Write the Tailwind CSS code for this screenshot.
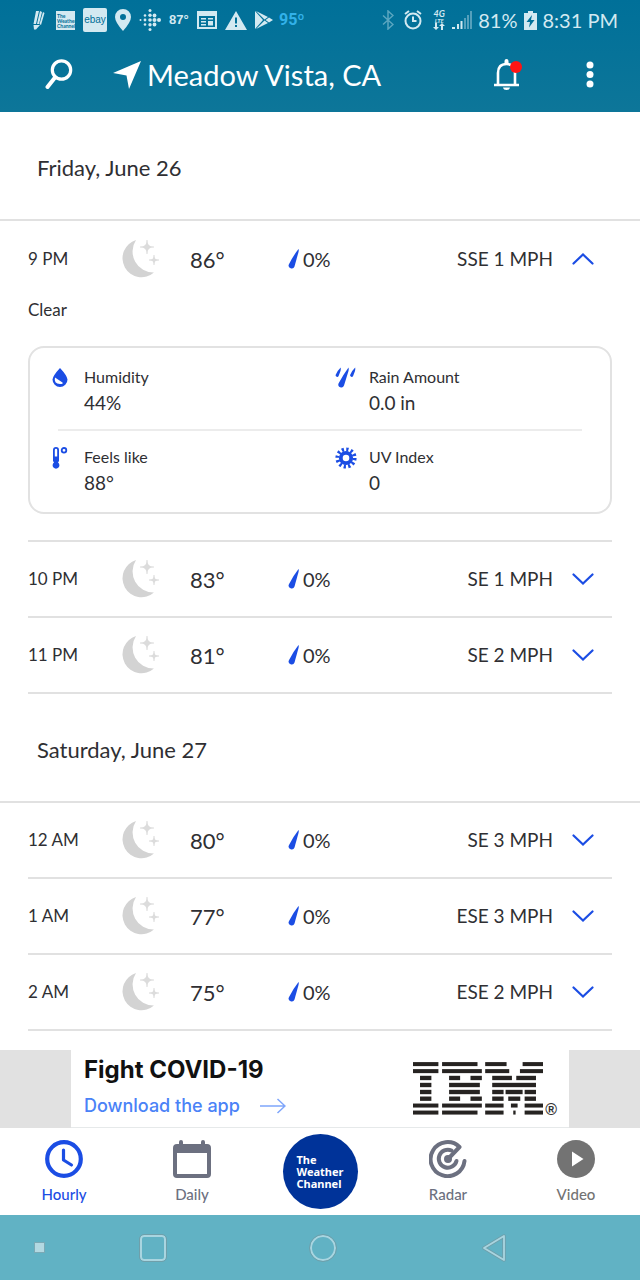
<!DOCTYPE html>
<html lang="en">
<head>
  <meta charset="UTF-8">
  <meta name="viewport" content="width=device-width, initial-scale=1.0">
  <title>Hourly - Meadow Vista, CA</title>
  <script src="https://cdn.jsdelivr.net/npm/@tailwindcss/browser@4"></script>
</head>
<body class="bg-white text-[#2f2f33] font-['Lato',sans-serif] flex flex-col min-h-screen">
  <!-- shared icons -->
  <svg class="hidden">
    <symbol id="moon" viewBox="0 0 38 38">
      <path fill="#d3d3d3" d="M14 0A19 19 0 1 0 32 32.500A21 21 0 0 1 14 0Z"/>
      <path fill="#dcdcdc" d="M25 0Q25.300 6.700 32 7Q25.300 7.300 25 14Q24.700 7.300 18 7Q24.700 6.700 25 0ZM32 15Q32.200 19.800 37 20Q32.200 20.200 32 25Q31.800 20.200 27 20Q31.800 19.800 32 15Z"/>
      <path stroke="#dcdcdc" stroke-width="1" d="M25 0V14M18 7H32M32 15V25M27 20H37"/>
    </symbol>
    <symbol id="drop" viewBox="0 0 12 20">
      <path fill="#1b4de4" d="M10.500 0Q11 1 10.500 3L6.500 17.500A3 3 0 0 1 0.800 15.500Q5 7 10.500 0Z"/>
    </symbol>
    <symbol id="chevron" viewBox="0 0 22 12">
      <path fill="none" stroke="#1b4de4" stroke-width="2.200" stroke-linecap="round" d="M1.500 1.500L11 10.500L20.500 1.500"/>
    </symbol>
  </svg>

  <!-- header -->
  <header class="bg-gradient-to-b from-[#007099] to-[#0d7699] text-white">
    <div class="h-10 pl-8 pr-[22px] flex items-center justify-between text-[#d3e9f1]">
      <div class="flex items-center gap-2">
        <svg class="w-4 h-5" viewBox="0 0 16 20" fill="currentColor"><path d="M4 1L7 1L4 14L1.500 14ZM8 1L10 2L7 14L5 14ZM11 2L12.500 3L9 15L7.500 14ZM1.500 15H8L4 19.500H2Z"/></svg>
        <div class="w-[19px] h-[19px] bg-[#d3e9f1] text-[#006f98] text-[5px] leading-[5px] font-bold pl-px pt-[3px]">The<br>Weather<br>Channel</div>
        <div class="w-6 h-6 rounded-xs bg-[#d3e9f1] text-[#006f98] text-[10px] leading-6 text-center font-['Liberation_Sans',sans-serif]">ebay</div>
        <svg class="w-4 h-[22px]" viewBox="0 0 16 22" fill="currentColor"><path fill-rule="evenodd" d="M8 0A8 8 0 0 0 0 8Q0 13 8 22Q16 13 16 8A8 8 0 0 0 8 0ZM8 5A3 3 0 1 1 8 11A3 3 0 0 1 8 5Z"/></svg>
        <svg class="w-[22px] h-[22px]" viewBox="0 0 22 22" fill="currentColor">
          <circle cx="1.500" cy="11" r="1"/><circle cx="6" cy="6.500" r="1.300"/><circle cx="6" cy="11" r="1.400"/><circle cx="6" cy="15.500" r="1.300"/>
          <circle cx="11" cy="1.500" r="1.500"/><circle cx="11" cy="6.300" r="1.700"/><circle cx="11" cy="11" r="1.800"/><circle cx="11" cy="15.700" r="1.700"/><circle cx="11" cy="20.500" r="1.500"/>
          <circle cx="15.500" cy="6.500" r="1.900"/><circle cx="15.500" cy="11" r="2"/><circle cx="15.500" cy="15.500" r="1.900"/><circle cx="20" cy="11" r="2"/>
        </svg>
        <span class="w-5 text-[13px] leading-5 font-bold font-['Liberation_Sans',sans-serif]">87°</span>
        <svg class="w-5 h-[18px]" viewBox="0 0 20 18"><path fill="currentColor" fill-rule="evenodd" d="M0 0H20V18H0ZM2 5V16H18V5ZM4 7H9V8.500H4ZM11 7H16V8.500H11ZM4 10H9V11.500H4ZM4 13H9V14.500H4ZM11 10H16V14.500H11Z"/></svg>
        <svg class="w-[22px] h-[19px]" viewBox="0 0 22 19"><path fill="currentColor" fill-rule="evenodd" d="M11 0L22 19H0ZM10 6.500H12V12.500H10ZM10 14H12V16H10Z"/></svg>
        <svg class="w-[18px] h-[18px]" viewBox="0 0 18 18"><path fill="currentColor" d="M0 0L8 9L0 18ZM1 0L13 6L9.500 8.500ZM1 18L13 12L9.500 9.500ZM14 6.500L18 9L14 11.500L10.500 9Z"/></svg>
        <span class="-ml-0.5 text-base leading-5 font-bold text-[#32b1e9] font-['Roboto',sans-serif]">95º</span>
      </div>
      <div class="flex items-center gap-1.5">
        <svg class="w-3 h-5 text-[#5ba6c0]" viewBox="0 0 12 20" fill="none" stroke="currentColor" stroke-width="1.500"><path d="M1 5.500L11 14.500L6 19V1L11 5.500L1 14.500"/></svg>
        <svg class="mx-1 w-[18px] h-5" viewBox="0 0 18 20" fill="none" stroke="currentColor" stroke-width="2"><circle cx="9" cy="11" r="7.500"/><path d="M9 6.500V11H12.500M1 4L5 1M17 4L13 1"/></svg>
        <div class="w-[14px] flex flex-col items-center font-bold italic">
          <span class="text-[9px] leading-[8px]">4G</span>
          <span class="text-[6px] leading-[5px]">LTE</span>
          <svg class="w-3 h-[7px]" viewBox="0 0 12 7" fill="currentColor"><path d="M2 0H4V4H6L3 7L0 4H2ZM8 7H10V3H12L9 0L6 3H8Z"/></svg>
        </div>
        <svg class="w-5 h-[18px]" viewBox="0 0 20 18" fill="currentColor"><path d="M0 16H3V18H0ZM5 13H7V18H5ZM8.500 10H10.500V18H8.500Z"/><path opacity=".4" d="M12 7H14V18H12ZM15 4H17V18H15ZM18 0H20V18H18Z"/></svg>
        <span class="text-xl leading-6">81%</span>
        <svg class="w-[13px] h-[19px]" viewBox="0 0 13 19"><path fill="currentColor" fill-rule="evenodd" d="M4 0H9V2H13V19H0V2H4ZM8 4L2.500 11H6L5 16.500L10.500 9H7Z"/></svg>
        <span class="text-xl leading-6 whitespace-nowrap">8:31 PM</span>
      </div>
    </div>
    <div class="h-[72px] pl-[45px] pr-[46px] pb-0.5 flex items-center">
      <button type="button" aria-label="Search">
        <svg class="w-7 h-8" viewBox="0 0 28 32" fill="none" stroke="currentColor" stroke-width="3.200" stroke-linecap="round"><circle cx="16.500" cy="11" r="9.200"/><path stroke-width="4" d="M10 18.500L2.500 28"/></svg>
      </button>
      <svg class="ml-10 w-7 h-7" viewBox="0 0 28 28" fill="currentColor"><path d="M28 0L16 28L13.500 14.500L0 12Z"/></svg>
      <h1 class="ml-1.5 text-[29px] leading-9 whitespace-nowrap">Meadow Vista, CA</h1>
      <button type="button" class="ml-auto" aria-label="Notifications">
        <svg class="w-7 h-8" viewBox="0 0 28 32"><g fill="none" stroke="currentColor" stroke-width="2.600"><path d="M0 26H25M4 26V14Q4 5 12.500 5Q21 5 21 14V26"/></g><path fill="currentColor" d="M10.500 5V2A2 2 0 0 1 14.500 2V5ZM9 28.500H16Q15.500 31 12.500 31Q9.500 31 9 28.500Z"/><circle cx="22" cy="8" r="6" fill="#ff1414"/></svg>
      </button>
      <button type="button" class="ml-14" aria-label="More options">
        <svg class="w-4 h-7" viewBox="0 0 16 28" fill="currentColor"><circle cx="12" cy="4" r="3.500"/><circle cx="12" cy="13.500" r="3.500"/><circle cx="12" cy="23" r="3.500"/></svg>
      </button>
    </div>
  </header>

  <!-- hourly forecast -->
  <main id="forecast" class="flex-grow pb-[18px]"></main>

  <!-- ad -->
  <aside class="h-[78px] bg-[#e1e1e1] flex justify-center">
    <div class="w-[498px] bg-white border-b border-[#e6e9ea] pl-[13px] pr-3 flex justify-between">
      <div class="pt-1">
        <p class="text-2xl leading-8 font-bold text-[#111] font-['Inter',sans-serif]">Fight COVID-19</p>
        <a href="#" class="mt-2 flex items-center gap-5 text-lg leading-6 font-medium text-[#4a82f7] font-['Inter',sans-serif]">Download the app
          <svg class="w-[26px] h-4 text-[#7fa6fb]" viewBox="0 0 26 16" fill="none" stroke="currentColor" stroke-width="1.500"><path d="M0 8H25M17.500 1L25 8L17.500 15"/></svg>
        </a>
      </div>
      <div class="pt-3 flex">
        <svg class="w-[130px] h-[53px]" viewBox="0 0 389 158" fill="#262321" role="img" aria-label="IBM">
          <rect x="0" y="0" width="76" height="12"/><rect x="87" y="0" width="106" height="12"/><rect x="216" y="0" width="64" height="12"/><rect x="328" y="0" width="61" height="12"/>
          <rect x="0" y="21" width="76" height="12"/><rect x="87" y="21" width="119" height="12"/><rect x="216" y="21" width="72" height="12"/><rect x="320" y="21" width="69" height="12"/>
          <rect x="21" y="41" width="34" height="13"/><rect x="108" y="41" width="33" height="13"/><rect x="172" y="41" width="34" height="13"/><rect x="237" y="41" width="59" height="13"/><rect x="309" y="41" width="59" height="13"/>
          <rect x="21" y="62" width="34" height="13"/><rect x="108" y="62" width="92" height="13"/><rect x="237" y="62" width="131" height="13"/>
          <rect x="21" y="83" width="34" height="13"/><rect x="108" y="83" width="92" height="13"/><rect x="237" y="83" width="34" height="13"/><rect x="277" y="83" width="51" height="13"/><rect x="334" y="83" width="34" height="13"/>
          <rect x="21" y="103" width="34" height="13"/><rect x="108" y="103" width="33" height="13"/><rect x="172" y="103" width="34" height="13"/><rect x="237" y="103" width="34" height="13"/><rect x="285" y="103" width="36" height="13"/><rect x="334" y="103" width="34" height="13"/>
          <rect x="0" y="124" width="76" height="12"/><rect x="87" y="124" width="119" height="12"/><rect x="216" y="124" width="55" height="12"/><rect x="293" y="124" width="20" height="12"/><rect x="334" y="124" width="55" height="12"/>
          <rect x="0" y="145" width="76" height="12"/><rect x="87" y="145" width="106" height="12"/><rect x="216" y="145" width="55" height="12"/><rect x="300" y="145" width="7" height="12"/><rect x="334" y="145" width="55" height="12"/>
        </svg>
        <span class="ml-0.5 mt-10 text-base leading-4 font-bold text-[#333] font-['Liberation_Sans',sans-serif]">®</span>
      </div>
    </div>
  </aside>

  <!-- tab bar -->
  <nav class="h-[87px] bg-white grid grid-cols-5 justify-items-center text-[15px] leading-5 font-medium text-[#6c7080]">
    <a href="#" class="pt-3 flex flex-col items-center gap-1.5 text-[#1b4de4]">
      <svg class="w-[38px] h-[38px]" viewBox="0 0 38 38" fill="none" stroke="currentColor"><circle cx="19" cy="19" r="16.800" stroke-width="4.200"/><path stroke-width="3.200" stroke-linecap="round" stroke-linejoin="round" d="M18.500 10V20L26.500 25"/></svg>
      Hourly
    </a>
    <a href="#" class="pt-3 flex flex-col items-center gap-1.5">
      <svg class="w-[38px] h-[38px]" viewBox="0 0 38 38"><path fill="currentColor" fill-rule="evenodd" d="M6 4V2A2 2 0 0 1 10 2V4H28V2A2 2 0 0 1 32 2V4H34Q38 4 38 8V34Q38 38 34 38H4Q0 38 0 34V8Q0 4 4 4ZM4 13V34H34V13Z"/></svg>
      Daily
    </a>
    <a href="#" class="mt-1.5 w-[75px] h-[75px] rounded-full bg-[#003399] text-white text-[11px] leading-3 font-bold font-['Noto_Sans',sans-serif] flex items-center justify-center">
      <span>The<br>Weather<br>Channel</span>
    </a>
    <a href="#" class="pt-3 flex flex-col items-center gap-1.5">
      <svg class="w-[38px] h-[38px]" viewBox="0 0 38 38" fill="none" stroke="currentColor" stroke-width="4" stroke-linecap="round" stroke-linejoin="round"><path d="M35.500 21A17 17 0 1 1 30.500 7L19 19"/><path d="M27.500 21A9 9 0 1 1 22.500 10.500"/><circle cx="19" cy="19" r="2"/></svg>
      Radar
    </a>
    <a href="#" class="pt-3 flex flex-col items-center gap-1.5 text-[#737373]">
      <svg class="w-[38px] h-[38px]" viewBox="0 0 38 38"><circle cx="19" cy="19" r="19" fill="currentColor"/><path fill="#fff" d="M15 11.500L26.500 19L15 26.500Z"/></svg>
      Video
    </a>
  </nav>

  <!-- system buttons -->
  <footer class="h-[65px] bg-[#61b2c4] text-[#a9d5e0] grid grid-cols-[78fr_149fr_191fr_151fr_71fr] items-center justify-items-center">
    <span class="w-[9px] h-[9px] bg-[#b3d9e2] outline outline-[#7aa9b5]"></span>
    <button type="button" class="w-[26px] h-[26px] border-2 border-[#a9d5e0] rounded-sm outline outline-[#6f9faa]" aria-label="Recent apps"></button>
    <button type="button" class="w-[26px] h-[26px] border-2 border-[#a9d5e0] rounded-full outline outline-[#6f9faa]" aria-label="Home"></button>
    <button type="button" aria-label="Back">
      <svg class="w-6 h-7" viewBox="0 0 24 28" fill="none" stroke-linejoin="round"><path stroke="#6f9faa" stroke-width="3.500" d="M22 2V26L2 14Z"/><path stroke="currentColor" stroke-width="1.800" d="M22 2V26L2 14Z"/></svg>
    </button>
  </footer>

  <script>
    const days = [
      { name: 'Friday, June 26', hours: [
        { time: '9 PM', temp: '86°', rain: '0%', wind: 'SSE 1 MPH', open: true },
        { time: '10 PM', temp: '83°', rain: '0%', wind: 'SE 1 MPH' },
        { time: '11 PM', temp: '81°', rain: '0%', wind: 'SE 2 MPH' }
      ]},
      { name: 'Saturday, June 27', hours: [
        { time: '12 AM', temp: '80°', rain: '0%', wind: 'SE 3 MPH' },
        { time: '1 AM', temp: '77°', rain: '0%', wind: 'ESE 3 MPH' },
        { time: '2 AM', temp: '75°', rain: '0%', wind: 'ESE 2 MPH' }
      ]}
    ];

    // one cell of the details card
    function cell(icon, label, value) {
      return `
        <div class="flex">
          <svg class="mt-[3px] w-[22px] h-[22px] mr-3 text-[#1b4de4]" viewBox="0 0 22 22">${icon}</svg>
          <dl><dt class="text-base leading-[26px]">${label}</dt><dd class="text-[19px] leading-[26px]">${value}</dd></dl>
        </div>`;
    }

    const humidity = '<path fill="currentColor" fill-rule="evenodd" d="M10 1Q17 8.500 17.500 12.500A7.500 7.500 0 0 1 2.500 12.500Q3 8.500 10 1ZM5 10.500Q3.500 16.500 10 17Q13.500 17 12.500 15.500Z"/>';
    const rain = '<path fill="currentColor" d="M13.500 0.500Q14 2 13.500 4L9 18.500A2.900 2.900 0 0 1 3.500 16.500Q8 8 13.500 0.500ZM5.700 0.500Q6 2 5.500 4L3.600 9A1.600 1.600 0 0 1 0.600 8Q2 4 5.700 0.500ZM20.200 0.500Q20.500 2 20 4L18.100 9A1.600 1.600 0 0 1 15.100 8Q16.500 4 20.200 0.500Z"/>';
    const feels = '<path fill="currentColor" fill-rule="evenodd" d="M3 3A3 3 0 0 1 9 3V14L8 15.500A3.400 3.400 0 1 1 4 15.500L3 14ZM4.800 3V9.500H7.200V3A1.200 1.200 0 0 0 4.800 3Z"/><circle cx="14" cy="3.300" r="2.300" fill="none" stroke="currentColor" stroke-width="1.800"/>';
    const uv = '<g fill="none" stroke="currentColor"><circle cx="11" cy="11" r="5.200" stroke-width="3.800"/><circle cx="11" cy="11" r="8.600" stroke-width="4" stroke-dasharray="2.200 2.303"/></g>';

    function details() {
      return `
        <p class="text-[17px] leading-[26px]">Clear</p>
        <div class="mt-[23px] mb-[26px] border-2 border-[#e2e2e2] rounded-2xl py-4 pl-5 pr-7">
          <div class="grid grid-cols-[286fr_248fr]">${cell(humidity, 'Humidity', '44%')}${cell(rain, 'Rain Amount', '0.0 in')}</div>
          <hr class="my-[13px] ml-2 border-t-2 border-[#ececec]">
          <div class="grid grid-cols-[286fr_248fr]">${cell(feels, 'Feels like', '88°')}${cell(uv, 'UV Index', '0')}</div>
        </div>`;
    }

    function row(h) {
      return `
        <li class="mx-7 border-b-2 border-[#e1e1e1]">
          <div class="${h.open ? 'h-[76px]' : 'h-[74px]'} flex items-center">
            <span class="w-[94px] text-[17px]">${h.time}</span>
            <svg class="w-[38px] h-[38px]"><use href="#moon"/></svg>
            <span class="ml-[30px] w-[98px] text-[22px]">${h.temp}</span>
            <svg class="w-3 h-5"><use href="#drop"/></svg>
            <span class="ml-[3px] text-xl">${h.rain}</span>
            <span class="ml-auto text-[19px]">${h.wind}</span>
            <button type="button" class="ml-[19px] mr-[18px] ${h.open ? 'rotate-180' : ''}" aria-label="Details for ${h.time}">
              <svg class="w-[22px] h-3"><use href="#chevron"/></svg>
            </button>
          </div>
          ${h.open ? details() : ''}
        </li>`;
    }

    document.getElementById('forecast').innerHTML = days.map(d => `
      <section>
        <h2 class="h-[109px] px-[37px] pt-1 flex items-center border-b-2 border-[#e1e1e1] text-[22px]">${d.name}</h2>
        <ul>${d.hours.map(row).join('')}</ul>
      </section>`).join('');
  </script>
</body>
</html>
